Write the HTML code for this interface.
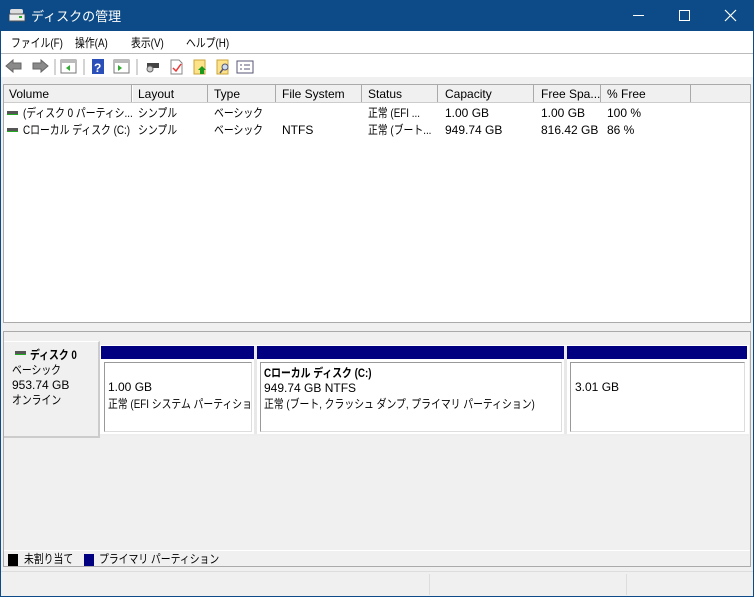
<!DOCTYPE html>
<html><head><meta charset="utf-8"><style>
*{margin:0;padding:0;box-sizing:border-box}
body{width:754px;height:597px;overflow:hidden;font-family:"Liberation Sans","Noto Sans CJK JP",sans-serif;font-size:12px;color:#000;background:#0c4b87;position:relative}
.a{position:absolute}
.t{white-space:nowrap}
.j{transform:scaleX(.82);transform-origin:0 0}
</style></head><body>
<div class="a" style="left:0;top:0;width:754px;height:31px;background:#0c4b87"></div>
<svg class="a" style="left:9px;top:8px" width="16" height="14"><rect x="1" y="1" width="13" height="5" rx="2" fill="#ddd"/><rect x="0" y="6" width="16" height="7" fill="#eee" stroke="#555"/><rect x="10" y="8" width="3" height="2" fill="#2a2"/></svg>
<div class="a t" style="left:31px;top:6px;color:#fff;font-size:13px">ディスクの管理</div>
<div class="a" style="left:633px;top:15px;width:11px;height:1px;background:#fff"></div>
<div class="a" style="left:679px;top:10px;width:11px;height:11px;border:1px solid #fff"></div>
<svg class="a" style="left:724px;top:9px" width="13" height="13"><path d="M1 1L12 12M12 1L1 12" stroke="#fff" stroke-width="1.2"/></svg>
<div class="a" style="left:1px;top:31px;width:752px;height:565px;background:#f0f0f0"></div>
<div class="a" style="left:1px;top:31px;width:752px;height:22px;background:#fff"></div>
<div class="a t j" style="left:11px;top:34px">ファイル(F)</div>
<div class="a t j" style="left:75px;top:34px">操作(A)</div>
<div class="a t j" style="left:131px;top:34px">表示(V)</div>
<div class="a t j" style="left:186px;top:34px">ヘルプ(H)</div>
<div class="a" style="left:1px;top:53px;width:752px;height:1px;background:#bbb"></div>
<div class="a" style="left:1px;top:54px;width:752px;height:23px;background:#fff"></div>
<svg class="a" style="left:4px;top:57px" width="260" height="20">
<path d="M2 9L9 3V6H17V12H9V15Z" fill="#8a8a8a" stroke="#666"/>
<path d="M44 9L37 3V6H29V12H37V15Z" fill="#8a8a8a" stroke="#666"/>
<line x1="51" y1="2" x2="51" y2="18" stroke="#aaa"/>
<rect x="57" y="3" width="15" height="13" fill="#fff" stroke="#777"/><rect x="57" y="3" width="15" height="3" fill="#bbb"/><path d="M66 8L62 11L66 14Z" fill="#3a3"/>
<line x1="80" y1="2" x2="80" y2="18" stroke="#aaa"/>
<rect x="88" y="2" width="12" height="15" fill="#2a4fb8"/><text x="90" y="15" fill="#fff" font-size="12" font-weight="bold" font-family="Liberation Sans">?</text>
<rect x="110" y="3" width="15" height="13" fill="#fff" stroke="#777"/><rect x="110" y="3" width="15" height="3" fill="#bbb"/><path d="M114 8L118 11L114 14Z" fill="#3a3"/>
<line x1="133" y1="2" x2="133" y2="18" stroke="#aaa"/>
<rect x="143" y="6" width="12" height="5" fill="#444"/><circle cx="146" cy="12" r="3" fill="#ccc" stroke="#666"/>
<path d="M167 3H175L178 6V17H167Z" fill="#fff" stroke="#888"/><path d="M169 11L172 14L177 7" stroke="#e33" fill="none" stroke-width="1.5"/>
<rect x="190" y="3" width="11" height="14" fill="#fce38a" stroke="#caa33a"/><path d="M198 9L202 13H200V17H196V13H194Z" fill="#1a9a1a"/>
<rect x="213" y="3" width="11" height="14" fill="#fce38a" stroke="#caa33a"/><circle cx="221" cy="10" r="3" fill="#cde" stroke="#557"/><line x1="219" y1="12" x2="216" y2="16" stroke="#557" stroke-width="1.5"/>
<rect x="233" y="4" width="16" height="12" fill="#fff" stroke="#557"/><path d="M236 8h2M240 8h6M236 12h2M240 12h6" stroke="#557"/>
</svg>
<div class="a" style="left:3px;top:84px;width:748px;height:239px;background:#fff;border:1px solid #aaa"></div>
<div class="a" style="left:4px;top:85px;width:746px;height:18px;background:#f0f0f0;border-bottom:1px solid #ccc"></div>
<div class="a" style="left:4px;top:85px;width:746px;height:18px;font-size:12px">
<div class="a t" style="left:5px;top:2px">Volume</div>
<div class="a" style="left:127px;top:0;width:2px;height:17px;border-left:1px solid #aaa;border-right:1px solid #fff"></div>
<div class="a t" style="left:134px;top:2px">Layout</div>
<div class="a" style="left:203px;top:0;width:2px;height:17px;border-left:1px solid #aaa"></div>
<div class="a t" style="left:210px;top:2px">Type</div>
<div class="a" style="left:271px;top:0;width:2px;height:17px;border-left:1px solid #aaa"></div>
<div class="a t" style="left:278px;top:2px">File System</div>
<div class="a" style="left:357px;top:0;width:2px;height:17px;border-left:1px solid #aaa"></div>
<div class="a t" style="left:364px;top:2px">Status</div>
<div class="a" style="left:433px;top:0;width:2px;height:17px;border-left:1px solid #aaa"></div>
<div class="a t" style="left:441px;top:2px">Capacity</div>
<div class="a" style="left:529px;top:0;width:2px;height:17px;border-left:1px solid #aaa"></div>
<div class="a t" style="left:537px;top:2px">Free Spa...</div>
<div class="a" style="left:596px;top:0;width:2px;height:17px;border-left:1px solid #aaa"></div>
<div class="a t" style="left:603px;top:2px">% Free</div>
<div class="a" style="left:686px;top:0;width:2px;height:17px;border-left:1px solid #aaa"></div>
</div>
<div class="a" style="left:7px;top:111px;width:11px;height:4px;background:#555;border-bottom:1px solid #2a2"></div>
<div class="a" style="left:7px;top:128px;width:11px;height:4px;background:#555;border-bottom:1px solid #2a2"></div>
<div class="a t j" style="left:23px;top:104px">(ディスク 0 パーティシ...</div>
<div class="a t j" style="left:138px;top:104px">シンプル</div>
<div class="a t j" style="left:214px;top:104px">ベーシック</div>
<div class="a t j" style="left:368px;top:104px">正常 (EFI ...</div>
<div class="a t" style="left:445px;top:106px">1.00 GB</div>
<div class="a t" style="left:541px;top:106px">1.00 GB</div>
<div class="a t" style="left:607px;top:106px">100 %</div>
<div class="a t j" style="left:23px;top:121px">Cローカル ディスク (C:)</div>
<div class="a t j" style="left:138px;top:121px">シンプル</div>
<div class="a t j" style="left:214px;top:121px">ベーシック</div>
<div class="a t" style="left:282px;top:123px">NTFS</div>
<div class="a t j" style="left:368px;top:121px">正常 (ブート...</div>
<div class="a t" style="left:445px;top:123px">949.74 GB</div>
<div class="a t" style="left:541px;top:123px">816.42 GB</div>
<div class="a t" style="left:607px;top:123px">86 %</div>
<div class="a" style="left:3px;top:331px;width:748px;height:236px;border:1px solid #aaa;background:#f0f0f0"></div>
<div class="a" style="left:4px;top:341px;width:96px;height:97px;background:#f0f0f0;border-right:2px solid #ccc;border-bottom:2px solid #ccc;border-top:1px solid #fff"></div>
<div class="a" style="left:15px;top:351px;width:11px;height:4px;background:#555;border-bottom:1px solid #2a2"></div>
<div class="a t j" style="left:30px;top:346px;font-weight:bold">ディスク 0</div>
<div class="a t j" style="left:12px;top:361px">ベーシック</div>
<div class="a t" style="left:12px;top:378px">953.74 GB</div>
<div class="a t j" style="left:12px;top:391px">オンライン</div>
<div class="a" style="left:100px;top:345px;width:649px;height:91px;background:#fff;border-bottom:2px solid #eee"></div>
<div class="a" style="left:101px;top:346px;width:153px;height:13px;background:#000080"></div>
<div class="a" style="left:257px;top:346px;width:307px;height:13px;background:#000080"></div>
<div class="a" style="left:567px;top:346px;width:180px;height:13px;background:#000080"></div>
<div class="a" style="left:254px;top:346px;width:3px;height:88px;background:#e8e8e8"></div>
<div class="a" style="left:564px;top:346px;width:3px;height:88px;background:#e8e8e8"></div>
<div class="a" style="left:104px;top:362px;width:148px;height:70px;border:1px solid #999;border-right-color:#ddd;border-bottom-color:#ddd;overflow:hidden">
<div class="a t" style="left:3px;top:17px">1.00 GB</div><div class="a t j" style="left:3px;top:32px">正常 (EFI システム パーティション)</div></div>
<div class="a" style="left:260px;top:362px;width:302px;height:70px;border:1px solid #999;border-right-color:#ddd;border-bottom-color:#ddd">
<div class="a t j" style="left:3px;top:1px;font-weight:bold">Cローカル ディスク (C:)</div>
<div class="a t" style="left:3px;top:18px">949.74 GB NTFS</div>
<div class="a t j" style="left:3px;top:32px">正常 (ブート, クラッシュ ダンプ, プライマリ パーティション)</div></div>
<div class="a" style="left:570px;top:362px;width:175px;height:70px;border:1px solid #999;border-right-color:#ddd;border-bottom-color:#ddd">
<div class="a t" style="left:4px;top:17px">3.01 GB</div></div>
<div class="a" style="left:4px;top:550px;width:746px;height:17px;border-top:1px solid #fff"></div>
<div class="a" style="left:8px;top:554px;width:10px;height:12px;background:#000"></div>
<div class="a t j" style="left:24px;top:550px">未割り当て</div>
<div class="a" style="left:84px;top:554px;width:10px;height:12px;background:#000080"></div>
<div class="a t j" style="left:99px;top:550px">プライマリ パーティション</div>
<div class="a" style="left:1px;top:571px;width:752px;height:1px;background:#ddd"></div>
<div class="a" style="left:429px;top:574px;width:1px;height:21px;background:#ddd"></div>
<div class="a" style="left:626px;top:574px;width:1px;height:21px;background:#ddd"></div>
</body></html>
